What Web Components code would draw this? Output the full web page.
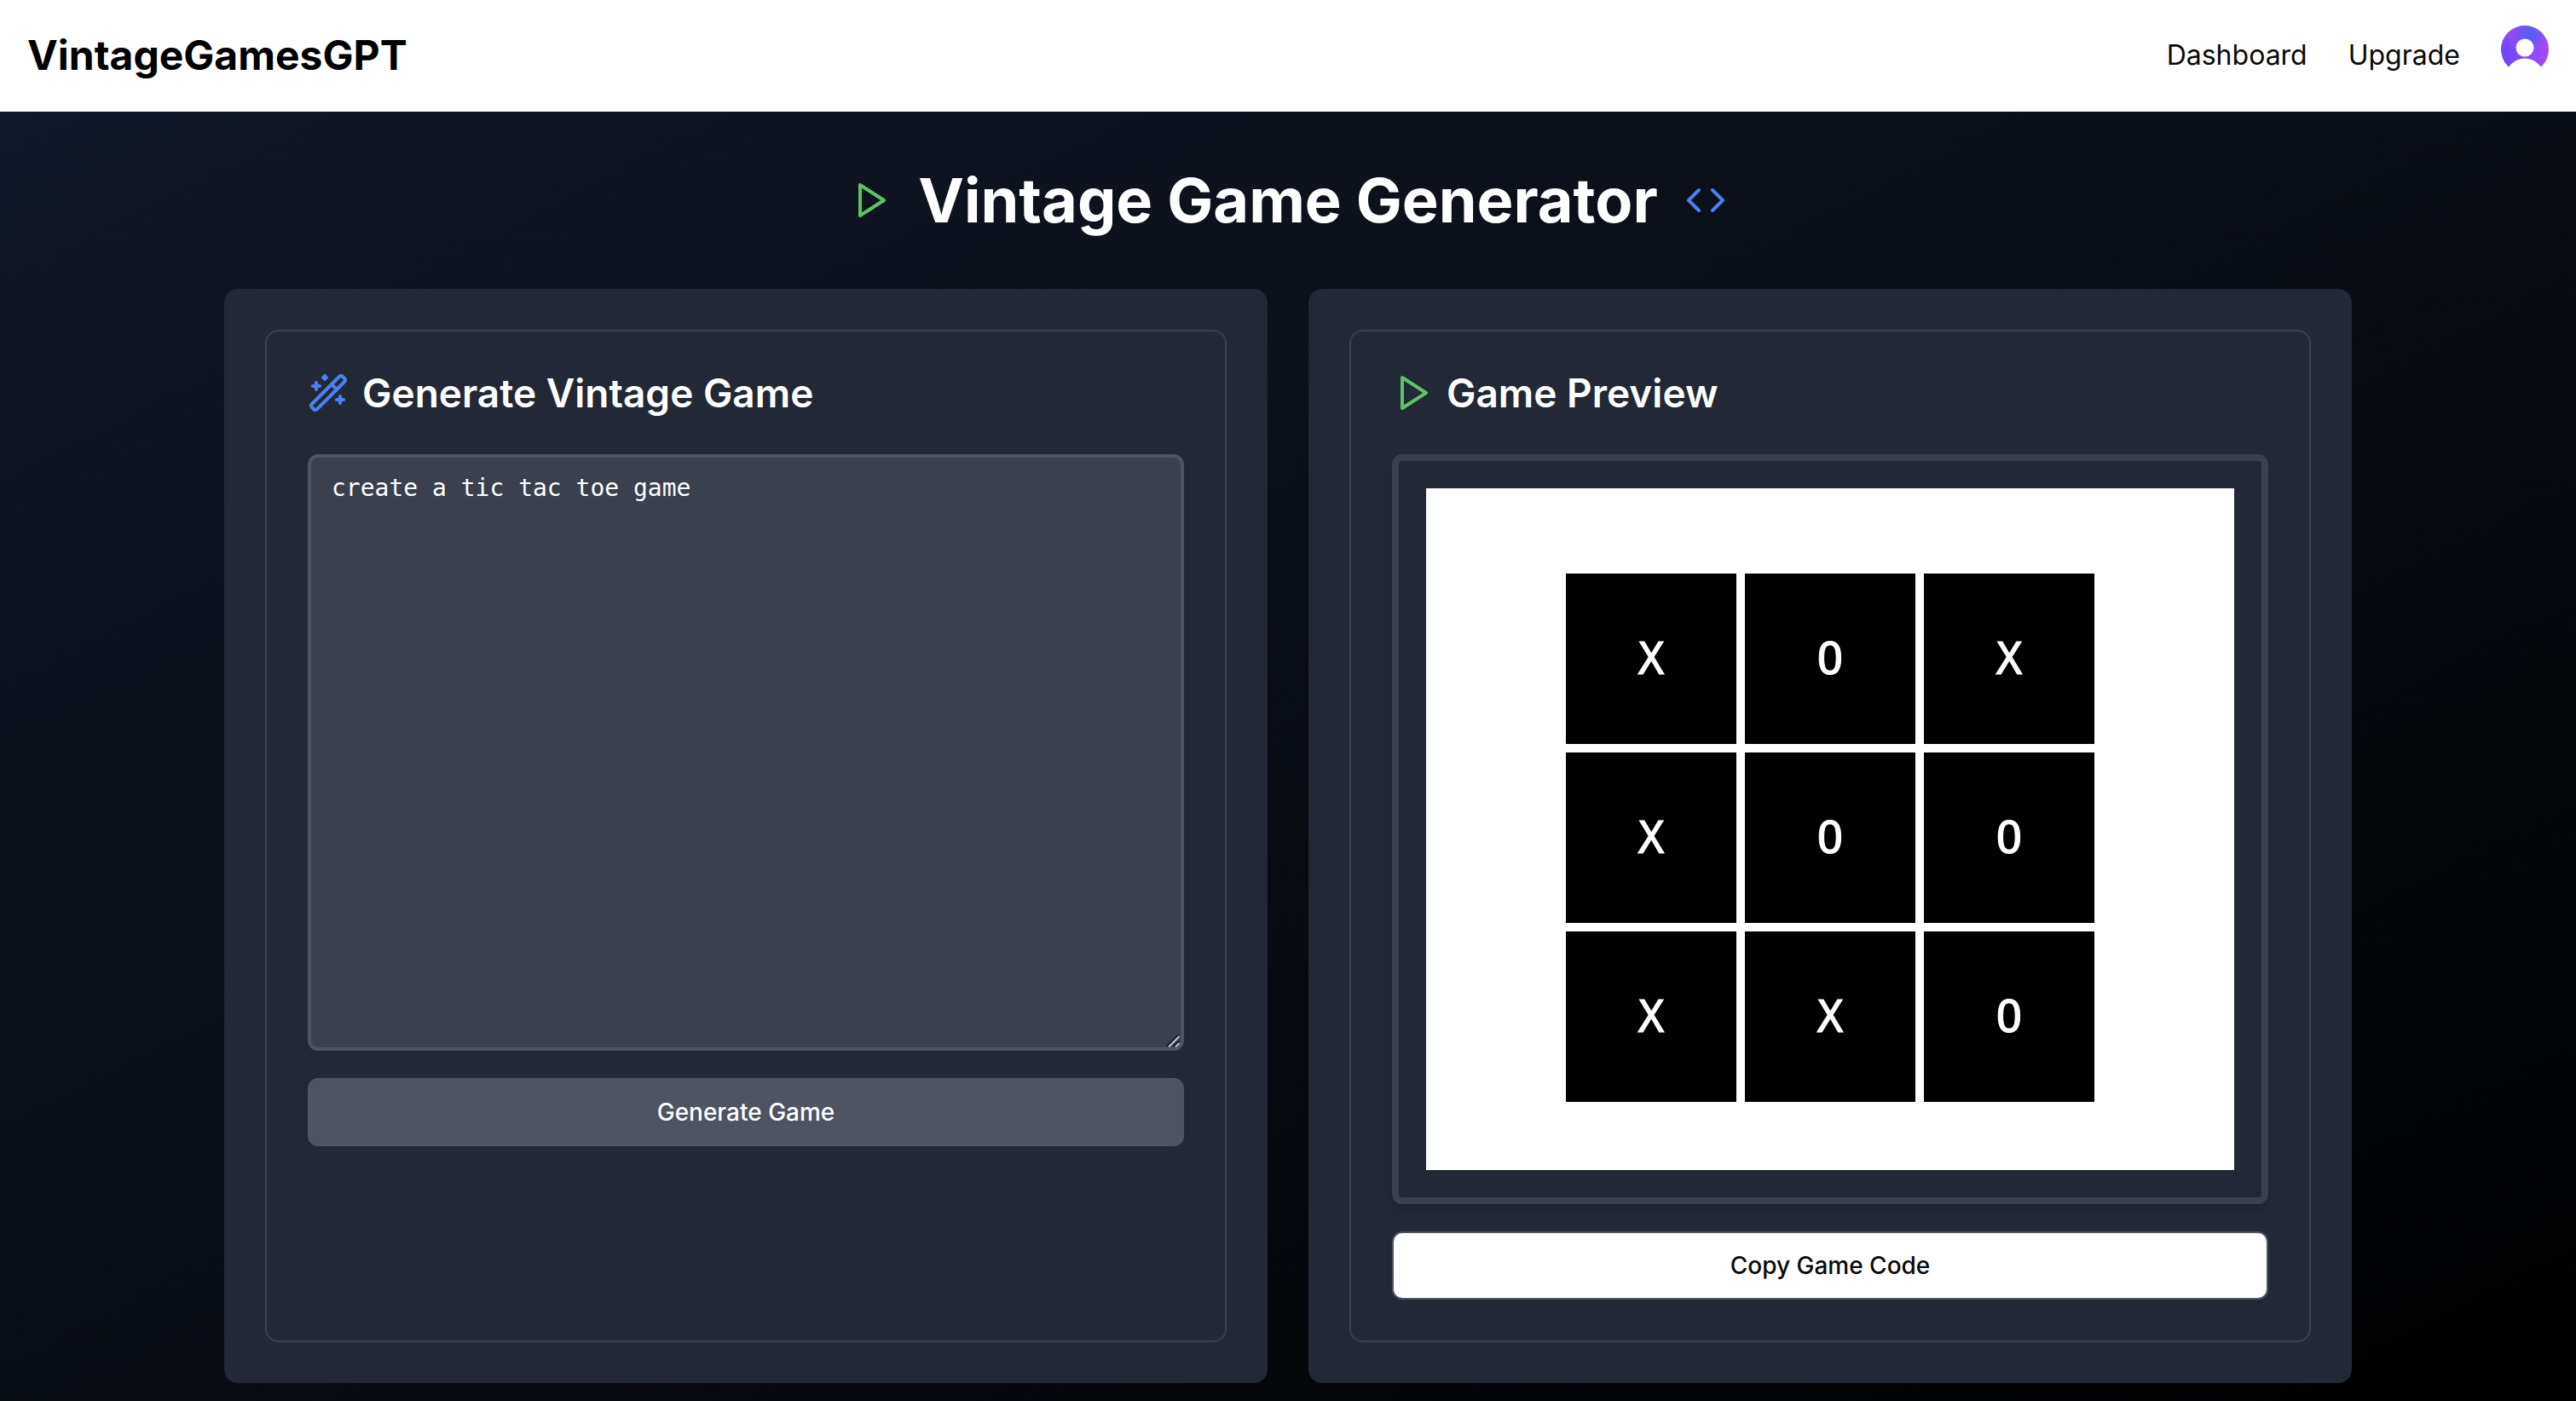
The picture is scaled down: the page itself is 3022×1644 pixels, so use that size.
<!DOCTYPE html>
<html lang="en">
<head>
<meta charset="utf-8">
<title>VintageGamesGPT</title>
<style>
  body { margin: 0; font-family: Inter, "Liberation Sans", sans-serif; background: #000; }
</style>
</head>
<body>
<vg-app></vg-app>

<script>
const ICONS = {
  play: '<polygon points="6 3 20 12 6 21 6 3"/>',
  code: '<polyline points="16 18 22 12 16 6"/><polyline points="8 6 2 12 8 18"/>',
  wand: '<path d="m21.64 3.64-1.28-1.28a1.21 1.21 0 0 0-1.72 0L2.36 18.64a1.21 1.21 0 0 0 0 1.72l1.28 1.28a1.2 1.2 0 0 0 1.72 0L21.64 5.36a1.2 1.2 0 0 0 0-1.72"/><path d="m14 7 3 3"/><path d="M5 6v4"/><path d="M19 14v4"/><path d="M10 2v2"/><path d="M7 8H3"/><path d="M21 16h-4"/><path d="M11 3H9"/>'
};

function define(name, render) {
  customElements.define(name, class extends HTMLElement {
    constructor() {
      super();
      this.attachShadow({ mode: 'open' });
    }
    connectedCallback() {
      this.shadowRoot.innerHTML = render(this);
    }
  });
}

define('vg-icon', el => `
  <style>
    :host { display: block; flex: none; width: 48px; height: 48px; }
    svg { display: block; width: 100%; height: 100%; }
  </style>
  <svg viewBox="0 0 24 24" fill="none" stroke="currentColor" stroke-width="2"
       stroke-linecap="round" stroke-linejoin="round" aria-hidden="true">${ICONS[el.getAttribute('name')]}</svg>`);

define('vg-avatar', () => `
  <style>
    :host { display: block; }
    button { display: block; padding: 0; border: 0; background: none; border-radius: 50%; cursor: pointer; }
    svg { display: block; width: 56px; height: 56px; }
  </style>
  <button type="button" aria-label="Open user menu">
    <svg viewBox="0 0 56 56" aria-hidden="true">
      <defs>
        <linearGradient id="base" x1="0" y1="0.6" x2="1" y2="0.5">
          <stop offset="0" stop-color="#6c47ff"/><stop offset="1" stop-color="#a04cf6"/>
        </linearGradient>
        <radialGradient id="blue" cx="0.62" cy="0.16" r="0.34">
          <stop offset="0" stop-color="#5060fa"/><stop offset="1" stop-color="#5060fa" stop-opacity="0"/>
        </radialGradient>
        <radialGradient id="pink" cx="0.2" cy="0.12" r="0.4">
          <stop offset="0" stop-color="#944ef2"/><stop offset="1" stop-color="#944ef2" stop-opacity="0"/>
        </radialGradient>
        <clipPath id="disc"><circle cx="28" cy="28" r="28"/></clipPath>
      </defs>
      <g clip-path="url(#disc)">
        <rect width="56" height="56" fill="url(#base)"/>
        <rect width="56" height="56" fill="url(#pink)"/>
        <rect width="56" height="56" fill="url(#blue)"/>
      </g>
      <circle cx="28" cy="26" r="10.5" fill="#fff"/>
      <circle cx="28" cy="61" r="22.5" fill="#fff"/>
    </svg>
  </button>`);

define('vg-header', () => `
  <style>
    :host { display: block; background: #fff; }
    header { display: flex; align-items: center; justify-content: space-between; padding: 30px 32px 31px; }
    .brand { font-size: 48px; line-height: 64px; font-weight: 700; color: #000; text-decoration: none; }
    nav { display: flex; align-items: center; gap: 48px; }
    nav a { font-size: 32px; line-height: 48px; color: #0a0a0a; text-decoration: none; }
    vg-avatar { padding-bottom: 14px; }
  </style>
  <header>
    <a class="brand" href="#">VintageGamesGPT</a>
    <nav>
      <a href="#dashboard">Dashboard</a>
      <a href="#upgrade">Upgrade</a>
      <vg-avatar></vg-avatar>
    </nav>
  </header>`);

define('vg-panel', el => `
  <style>
    :host { display: flex; padding: 48px; border-radius: 16px; background: #222835; min-width: 0; }
    section { flex: 1; min-width: 0; padding: 48px; border: 2px solid #3b404f; border-radius: 16px; }
    header { display: flex; align-items: center; gap: 16px; margin-bottom: 48px; }
    h2 { margin: 0; font-size: 46px; line-height: 48px; font-weight: 600; color: #fff; }
    vg-icon { color: ${el.getAttribute('tint')}; }
  </style>
  <section>
    <header><vg-icon name="${el.getAttribute('icon')}"></vg-icon><h2>${el.getAttribute('heading')}</h2></header>
    <slot></slot>
  </section>`);

define('vg-button', el => `
  <style>
    :host { display: block; margin-top: 32px; }
    button {
      display: block; width: 100%; height: 80px; padding: 0 32px; box-sizing: border-box;
      border: 2px solid #4e5461; border-radius: 12px; background: #4e5461; color: #fff;
      font: 500 28px/40px Inter, "Liberation Sans", sans-serif; cursor: pointer;
    }
    :host([variant="outline"]) button { background: #fff; color: #0a0a0a; }
  </style>
  <button type="button"><slot></slot></button>`);

define('vg-prompt', el => `
  <style>
    :host { display: block; position: relative; }
    textarea {
      display: block; width: 100%; height: 700px; box-sizing: border-box; margin: 0; padding: 16px 24px;
      border: 4px solid #4e5461; border-radius: 12px; background: #3b404f; color: #fff; outline: 0;
      font: 28px/40px "DejaVu Sans Mono", monospace; resize: none;
    }
    svg { position: absolute; right: 5px; bottom: 4px; width: 16px; height: 16px; pointer-events: none; }
  </style>
  <textarea aria-label="Game description" spellcheck="false">${el.getAttribute('value')}</textarea>
  <svg viewBox="0 0 16 16" fill="none" aria-hidden="true">
    <path d="M1 15 15 1M9 15l6-6" stroke="#141824" stroke-width="2"/>
    <path d="M3 15.500 15.500 3M11 15.500l4.500-4.500" stroke="#c4c6cb" stroke-width="2"/>
  </svg>`);

define('vg-board', el => `
  <style>
    :host { display: block; padding: 32px; border: 8px solid #3b404f; border-radius: 12px;
            box-shadow: 0 8px 12px -2px rgba(0,0,0,.1), 0 4px 8px -4px rgba(0,0,0,.1); }
    .stage { display: flex; justify-content: center; align-items: center; box-sizing: border-box;
             height: 800px; padding-top: 20px; background: #fff; }
    .grid { display: grid; grid-template-columns: repeat(3, 200px); grid-auto-rows: 200px; gap: 10px; }
    button { padding: 0; border: 0; border-radius: 0; background: #000; color: #fff; cursor: pointer;
             font: 52px/64px "DejaVu Sans Mono", monospace; -webkit-text-stroke: 1px #fff; }
  </style>
  <div class="stage"><div class="grid">
    ${[...el.getAttribute('cells')].map(c => `<button type="button">${c}</button>`).join('')}
  </div></div>`);

define('vg-app', () => `
  <style>
    :host { display: flex; flex-direction: column; min-height: 100vh; }
    main { flex: 1; background: linear-gradient(to bottom right, #111827, #000); }
    .container { max-width: 2496px; margin: 0 auto; padding: 64px 32px 16px; }
    .title { display: flex; justify-content: center; align-items: center; gap: 32px; margin-bottom: 64px; }
    h1 { margin: 0; font-size: 72px; line-height: 80px; font-weight: 700; color: #fff; }
    .columns { display: grid; grid-template-columns: repeat(2, minmax(0, 1fr)); gap: 48px; }
    .green { color: #5fc269; }
    .blue { color: #4b82f2; }
  </style>
  <vg-header></vg-header>
  <main>
    <div class="container">
      <div class="title">
        <vg-icon class="green" name="play"></vg-icon>
        <h1>Vintage Game Generator</h1>
        <vg-icon class="blue" name="code"></vg-icon>
      </div>
      <div class="columns">
        <vg-panel icon="wand" tint="#4b82f2" heading="Generate Vintage Game">
          <vg-prompt value="create a tic tac toe game"></vg-prompt>
          <vg-button>Generate Game</vg-button>
        </vg-panel>
        <vg-panel icon="play" tint="#5fc269" heading="Game Preview">
          <vg-board cells="XOXXOOXXO"></vg-board>
          <vg-button variant="outline">Copy Game Code</vg-button>
        </vg-panel>
      </div>
    </div>
  </main>`);
</script>
</body>
</html>
